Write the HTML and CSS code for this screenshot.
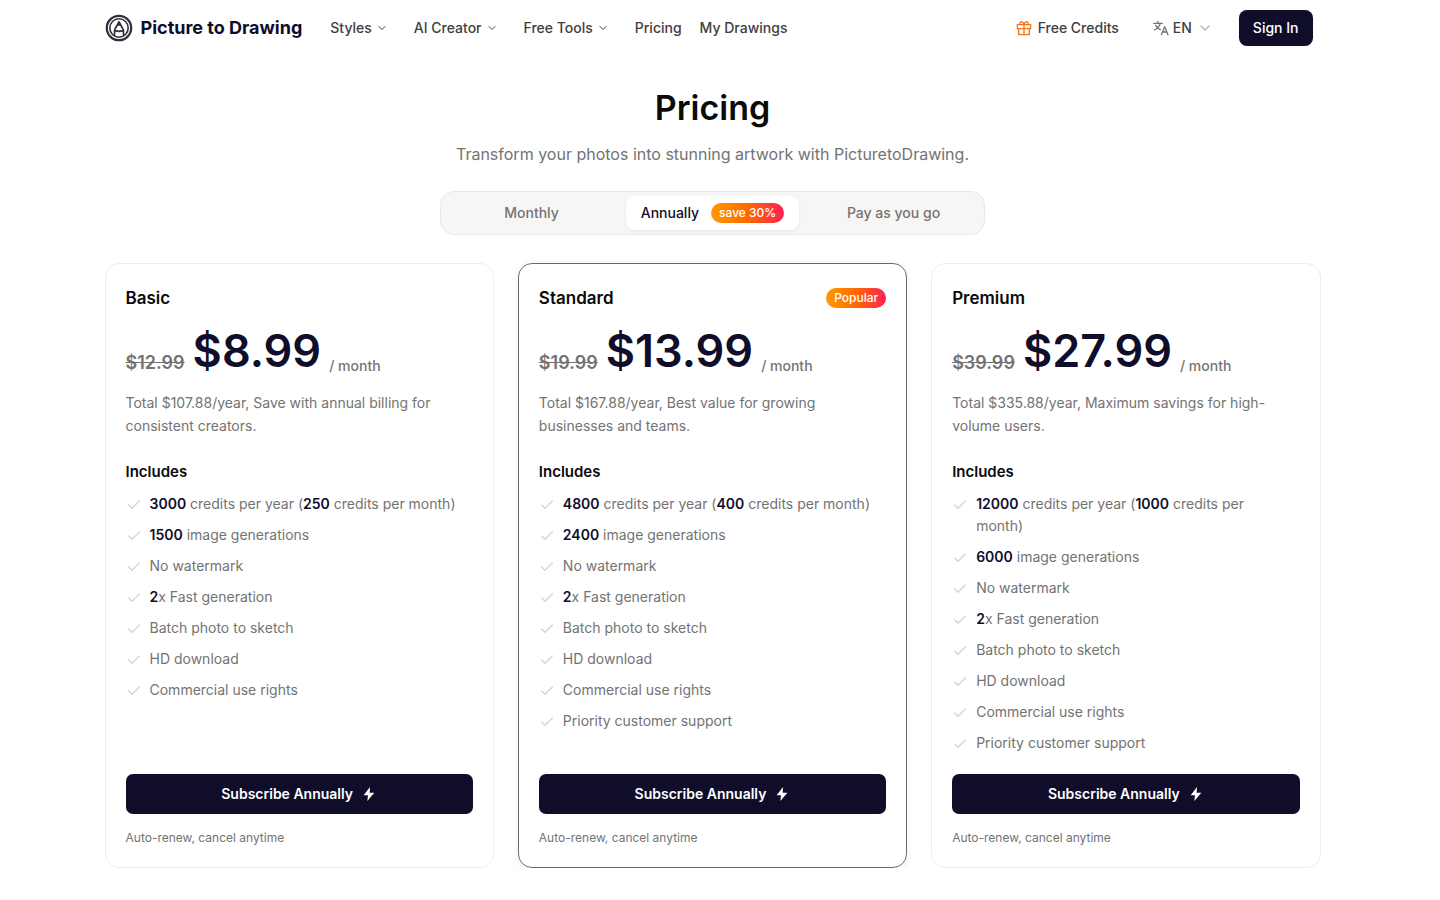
FILE: index.html
```html
<!DOCTYPE html>
<html lang="en">
<head>
  <meta charset="UTF-8">
  <meta name="viewport" content="width=device-width, initial-scale=1">
  <title>Pricing - Picture to Drawing</title>
  <link rel="stylesheet" href="styles.css">
</head>
<body>
  <!-- shared icons -->
  <svg class="sprite" aria-hidden="true">
    <symbol id="chevron" viewBox="0 0 24 24"><path d="m6 9 6 6 6-6"/></symbol>
    <symbol id="check" viewBox="0 0 24 24"><path d="M20 6 9 17l-5-5"/></symbol>
    <symbol id="bolt" viewBox="0 0 24 24"><path d="M13.5 1.5 4 14h6.5L9.5 22.5 20 10h-7z"/></symbol>
  </svg>

  <header class="header container">
    <a class="brand" href="#">
      <svg class="logo" viewBox="0 0 28 28">
        <circle cx="14" cy="14" r="12.2" class="logo-outer"/>
        <circle cx="14" cy="14" r="9.2"/>
        <path d="M9.5 21v-5L14 8l4.5 8v5M9.5 18c1.500-1.500 3-1.500 4.500-.5 1.500-1 3-1 4.500.5"/>
        <path class="logo-tip" d="m14 8-1.500 3h3z"/>
      </svg>
      <span>Picture to Drawing</span>
    </a>
    <nav class="nav">
      <button class="menu">Styles <svg class="icon-sm"><use href="#chevron"/></svg></button>
      <button class="menu">AI Creator <svg class="icon-sm"><use href="#chevron"/></svg></button>
      <button class="menu">Free Tools <svg class="icon-sm"><use href="#chevron"/></svg></button>
      <a href="#">Pricing</a>
      <a href="#">My Drawings</a>
    </nav>
    <div class="actions">
      <a class="credits" href="#">
        <svg class="icon gift" viewBox="0 0 24 24"><path d="M2 7h20v6H2zM4 13v9h16v-9M12 7v15M12 7C10 1 5 1 6 7M12 7c2-6 7-6 6 0"/></svg>
        Free Credits
      </a>
      <div class="language">
        <svg class="icon" viewBox="0 0 24 24"><path d="M1 5h13M7.500 2v3M11 5c-1.500 5-4.500 8-9 10M4 8c2 3.500 4.500 5.500 7 6.500M12.500 22l5-12 5 12M14.500 18h6"/></svg>
        <select aria-label="Language">
          <option>EN</option>
        </select>
        <svg class="icon chevron"><use href="#chevron"/></svg>
      </div>
      <button class="sign-in">Sign In</button>
    </div>
  </header>

  <main class="container">
    <h1>Pricing</h1>
    <p class="intro">Transform your photos into stunning artwork with PicturetoDrawing.</p>

    <div class="tabs" role="tablist">
      <button role="tab" aria-selected="false">Monthly</button>
      <button role="tab" aria-selected="true" class="active">Annually <span class="badge">save 30%</span></button>
      <button role="tab" aria-selected="false">Pay as you go</button>
    </div>

    <div class="plans">
      <section class="card">
        <div class="card-top">
          <h2>Basic</h2>
        </div>
        <div class="price"><del>$12.99</del><strong>$8.99</strong><span>/ month</span></div>
        <p class="description">Total $107.88/year, Save with annual billing for consistent creators.</p>
        <h3>Includes</h3>
        <ul>
          <li><svg class="icon"><use href="#check"/></svg><span><b>3000</b> credits per year (<b>250</b> credits per month)</span></li>
          <li><svg class="icon"><use href="#check"/></svg><span><b>1500</b> image generations</span></li>
          <li><svg class="icon"><use href="#check"/></svg><span>No watermark</span></li>
          <li><svg class="icon"><use href="#check"/></svg><span><b>2</b>x Fast generation</span></li>
          <li><svg class="icon"><use href="#check"/></svg><span>Batch photo to sketch</span></li>
          <li><svg class="icon"><use href="#check"/></svg><span>HD download</span></li>
          <li><svg class="icon"><use href="#check"/></svg><span>Commercial use rights</span></li>
        </ul>
        <button class="subscribe">Subscribe Annually <svg class="icon"><use href="#bolt"/></svg></button>
        <p class="note">Auto-renew, cancel anytime</p>
      </section>

      <section class="card featured">
        <div class="card-top">
          <h2>Standard</h2>
          <span class="badge">Popular</span>
        </div>
        <div class="price"><del>$19.99</del><strong>$13.99</strong><span>/ month</span></div>
        <p class="description">Total $167.88/year, Best value for growing businesses and teams.</p>
        <h3>Includes</h3>
        <ul>
          <li><svg class="icon"><use href="#check"/></svg><span><b>4800</b> credits per year (<b>400</b> credits per month)</span></li>
          <li><svg class="icon"><use href="#check"/></svg><span><b>2400</b> image generations</span></li>
          <li><svg class="icon"><use href="#check"/></svg><span>No watermark</span></li>
          <li><svg class="icon"><use href="#check"/></svg><span><b>2</b>x Fast generation</span></li>
          <li><svg class="icon"><use href="#check"/></svg><span>Batch photo to sketch</span></li>
          <li><svg class="icon"><use href="#check"/></svg><span>HD download</span></li>
          <li><svg class="icon"><use href="#check"/></svg><span>Commercial use rights</span></li>
          <li><svg class="icon"><use href="#check"/></svg><span>Priority customer support</span></li>
        </ul>
        <button class="subscribe">Subscribe Annually <svg class="icon"><use href="#bolt"/></svg></button>
        <p class="note">Auto-renew, cancel anytime</p>
      </section>

      <section class="card">
        <div class="card-top">
          <h2>Premium</h2>
        </div>
        <div class="price"><del>$39.99</del><strong>$27.99</strong><span>/ month</span></div>
        <p class="description">Total $335.88/year, Maximum savings for high-volume users.</p>
        <h3>Includes</h3>
        <ul>
          <li><svg class="icon"><use href="#check"/></svg><span><b>12000</b> credits per year (<b>1000</b> credits per month)</span></li>
          <li><svg class="icon"><use href="#check"/></svg><span><b>6000</b> image generations</span></li>
          <li><svg class="icon"><use href="#check"/></svg><span>No watermark</span></li>
          <li><svg class="icon"><use href="#check"/></svg><span><b>2</b>x Fast generation</span></li>
          <li><svg class="icon"><use href="#check"/></svg><span>Batch photo to sketch</span></li>
          <li><svg class="icon"><use href="#check"/></svg><span>HD download</span></li>
          <li><svg class="icon"><use href="#check"/></svg><span>Commercial use rights</span></li>
          <li><svg class="icon"><use href="#check"/></svg><span>Priority customer support</span></li>
        </ul>
        <button class="subscribe">Subscribe Annually <svg class="icon"><use href="#bolt"/></svg></button>
        <p class="note">Auto-renew, cancel anytime</p>
      </section>
    </div>
  </main>
</body>
</html>
```
FILE: styles.css
```css
* {
  box-sizing: border-box;
}
body {
  margin: 0;
  padding-right: 15px;
  font-family: Inter, sans-serif;
  font-size: 14px;
  line-height: 22px;
  color: #737373;
  background: #fff;
}
h1, h2, h3, p, ul {
  margin: 0;
  padding: 0;
}
button, select {
  font: inherit;
  color: inherit;
  border: none;
  background: none;
  padding: 0;
  cursor: pointer;
}
a {
  color: inherit;
  text-decoration: none;
}
svg {
  fill: none;
  stroke: currentColor;
  stroke-width: 2;
  stroke-linecap: round;
  stroke-linejoin: round;
  flex-shrink: 0;
}
.sprite {
  display: none;
}
.icon {
  width: 16px;
  height: 16px;
}
.icon-sm {
  width: 12px;
  height: 12px;
}
.container {
  max-width: 1216px;
  margin: 0 auto;
}

/* header */
.header {
  display: flex;
  align-items: center;
  height: 56px;
  padding-right: 8px;
  color: #404040;
  font-weight: 500;
}
.brand {
  display: flex;
  align-items: center;
  gap: 8px;
  font-size: 18px;
  font-weight: 700;
  color: #100d2b;
}
.logo {
  width: 28px;
  height: 28px;
  color: #2d303a;
  stroke-width: 1.6;
}
.logo-outer {
  stroke-width: 2.2;
}
.logo-tip {
  fill: currentColor;
}
.nav {
  display: flex;
  align-items: center;
  gap: 18px;
  margin-left: 28px;
}
.menu {
  display: flex;
  align-items: center;
  gap: 4px;
  margin-right: 8px;
}
.actions {
  display: flex;
  align-items: center;
  margin-left: auto;
}
.credits {
  display: flex;
  align-items: center;
  gap: 6px;
  margin-right: 34px;
}
.gift {
  color: #f2761b;
}
.language {
  display: flex;
  align-items: center;
  gap: 4px;
  margin-right: 26px;
}
.language .icon {
  color: #737373;
}
.language select {
  appearance: none;
}
.language .chevron {
  color: #b4b4b4;
}
.sign-in {
  height: 36px;
  padding: 0 14px;
  border-radius: 8px;
  background: #100d2b;
  color: #fff;
}

/* heading */
h1 {
  margin-top: 32px;
  font-size: 34px;
  line-height: 40px;
  font-weight: 600;
  text-align: center;
  color: #0a0a0a;
}
.intro {
  margin-top: 14px;
  font-size: 16px;
  line-height: 24px;
  text-align: center;
}
.tabs {
  display: grid;
  grid-template-columns: repeat(3, 1fr);
  gap: 8px;
  max-width: 545px;
  margin: 25px auto 28px;
  padding: 4px;
  border: 1px solid #ebe9e8;
  border-radius: 14px;
  background: #f8f6f5;
}
.tabs button {
  display: flex;
  align-items: center;
  justify-content: center;
  gap: 12px;
  height: 34px;
  border-radius: 8px;
  font-weight: 500;
}
.tabs .active {
  background: #fff;
  color: #100d2b;
  box-shadow: 0 1px 3px rgba(0,0,0,0.08);
}
.badge {
  padding: 0 8px;
  border-radius: 10px;
  font-size: 12px;
  line-height: 20px;
  font-weight: 500;
  color: #fff;
  background: linear-gradient(to right, #fe9a00, #ff6900, #ff2056);
}

/* plans */
.plans {
  display: grid;
  grid-template-columns: repeat(3, 1fr);
  gap: 24px;
}
.card {
  display: flex;
  flex-direction: column;
  padding: 20px;
  border: 1px solid #ededed;
  border-radius: 14px;
}
.featured {
  border-color: #6b6979;
  box-shadow: 0 2px 8px rgba(16,13,43,0.06);
}
.card-top {
  display: flex;
  align-items: center;
  justify-content: space-between;
  height: 28px;
}
h2 {
  font-size: 17px;
  font-weight: 600;
  color: #0a0a0a;
}
.price {
  display: flex;
  align-items: flex-end;
  gap: 8px;
  margin-top: 13px;
}
.price del {
  font-size: 18px;
  line-height: 28px;
  font-weight: 600;
}
.price strong {
  font-size: 45px;
  line-height: 52px;
  font-weight: 600;
  color: #100d2b;
}
.price span {
  font-weight: 500;
}
.description {
  margin-top: 14px;
  line-height: 23px;
}
h3 {
  margin-top: 24px;
  font-size: 15px;
  font-weight: 600;
  color: #0a0a0a;
}
ul {
  display: flex;
  flex-direction: column;
  gap: 9px;
  margin-top: 10px;
  list-style: none;
}
.card ul {
  padding: 0 8px 20px 0;
}
li {
  display: flex;
  gap: 8px;
}
li .icon {
  margin-top: 4px;
  color: #d4d4d4;
}
li b {
  font-weight: 600;
  color: #100d2b;
}
.subscribe {
  display: flex;
  align-items: center;
  justify-content: center;
  gap: 8px;
  flex-shrink: 0;
  height: 40px;
  margin-top: auto;
  border-radius: 7px;
  background: #100d2b;
  color: #fff;
  font-weight: 600;
}
.subscribe .icon {
  fill: currentColor;
  stroke: none;
}
.note {
  margin-top: 15px;
  font-size: 12px;
  line-height: 18px;
}
```
